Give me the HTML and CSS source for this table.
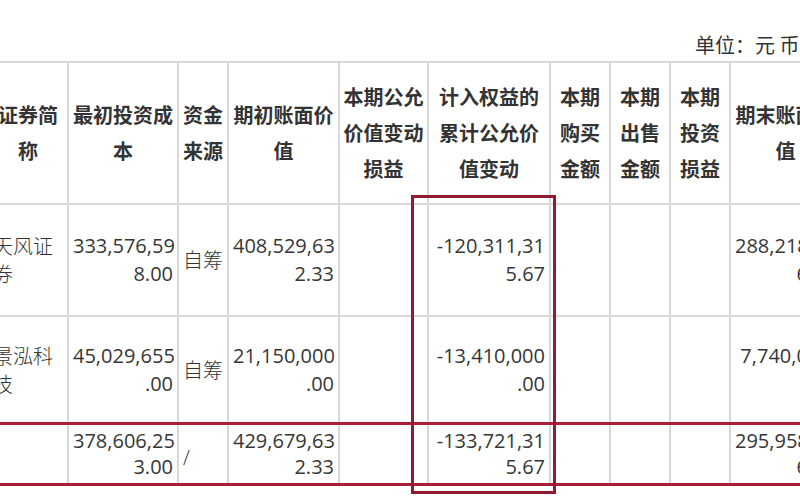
FILE: index.html
```html
<!DOCTYPE html>
<html lang="zh-CN">
<head>
<meta charset="utf-8">
<title>证券投资情况</title>
<link rel="stylesheet" href="styles.css">
</head>
<body>
<div class="page">
  <div class="unit">单位：元 币种：人民币</div>
  <table class="grid">
    <colgroup>
      <col class="c0"><col class="c1"><col class="c2"><col class="c3"><col class="c4">
      <col class="c5"><col class="c6"><col class="c7"><col class="c8"><col class="c9">
    </colgroup>
    <thead>
      <tr class="head">
        <th>证券简<br>称</th>
        <th>最初投资成<br>本</th>
        <th>资金<br>来源</th>
        <th>期初账面价<br>值</th>
        <th>本期公允<br>价值变动<br>损益</th>
        <th>计入权益的<br>累计公允价<br>值变动</th>
        <th>本期<br>购买<br>金额</th>
        <th>本期<br>出售<br>金额</th>
        <th>本期<br>投资<br>损益</th>
        <th>期末账面价<br>值</th>
      </tr>
    </thead>
    <tbody>
      <tr class="r1">
        <td class="name">天风证<br>券</td>
        <td class="num">333,576,59<br>8.00</td>
        <td class="src">自筹</td>
        <td class="num">408,529,63<br>2.33</td>
        <td></td>
        <td class="num">-120,311,31<br>5.67</td>
        <td></td><td></td><td></td>
        <td class="num">288,218,31<br>6.66</td>
      </tr>
      <tr class="r2">
        <td class="name">景泓科<br>技</td>
        <td class="num">45,029,655<br>.00</td>
        <td class="src">自筹</td>
        <td class="num">21,150,000<br>.00</td>
        <td></td>
        <td class="num">-13,410,000<br>.00</td>
        <td></td><td></td><td></td>
        <td class="num">7,740,000.<br>00</td>
      </tr>
      <tr class="total">
        <td class="name"></td>
        <td class="num">378,606,25<br>3.00</td>
        <td class="src slash">/</td>
        <td class="num">429,679,63<br>2.33</td>
        <td></td>
        <td class="num">-133,721,31<br>5.67</td>
        <td></td><td></td><td></td>
        <td class="num">295,958,31<br>6.66</td>
      </tr>
    </tbody>
  </table>
  <div class="highlight"></div>
</div>
</body>
</html>
```
FILE: styles.css
```css
html, body {
  margin: 0;
  padding: 0;
  background: #ffffff;
  overflow: hidden;
  width: 800px;
  height: 500px;
}

.page {
  position: relative;
  width: 800px;
  height: 500px;
  overflow: hidden;
  font-family: "Open Sans", "Noto Sans CJK SC", sans-serif;
  color: #333333;
}

.unit {
  height: 61px;
  box-sizing: border-box;
  padding: 0 0 2px 695px;
  display: flex;
  align-items: flex-end;
  font-family: "Noto Sans CJK SC", sans-serif;
  font-size: 20px;
  line-height: 28px;
  font-weight: 400;
  color: #333333;
  white-space: nowrap;
}

.grid {
  border-collapse: collapse;
  table-layout: fixed;
  width: 853px;
  margin-left: -13px;
}

.c0 { width: 80px; }
.c1 { width: 110px; }
.c2 { width: 50px; }
.c3 { width: 111px; }
.c4 { width: 89px; }
.c5 { width: 122px; }
.c6 { width: 60px; }
.c7 { width: 60px; }
.c8 { width: 60px; }
.c9 { width: 111px; }

.grid th,
.grid td {
  border: 2px solid #d8d8d8;
  padding: 0 4px;
  vertical-align: middle;
  overflow: hidden;
  white-space: nowrap;
}

.grid th {
  font-family: "Noto Sans CJK SC", sans-serif;
  font-weight: 700;
  font-size: 20px;
  line-height: 36px;
  text-align: center;
  color: #333333;
  height: 140px;
  padding: 0;
}

.grid td {
  font-size: 20px;
  line-height: 28px;
}

.r1 td { height: 110px; }
.r2 td { height: 105px; }
.total td {
  height: 58px;
  line-height: 26px;
  border-top: 3px solid #ab1e38;
  border-bottom: 3px solid #ab1e38;
}

.num {
  text-align: right;
  font-family: "Open Sans", sans-serif;
  font-weight: 400;
  color: #363636;
}

.name {
  text-align: left;
  font-family: "Noto Sans CJK SC", sans-serif;
  font-weight: 300;
  padding-left: 3px;
}

.src {
  text-align: left;
  font-family: "Noto Sans CJK SC", sans-serif;
  font-weight: 300;
  padding-left: 4px;
}

.total td.slash {
  font-family: "Open Sans", sans-serif;
  padding-top: 8px;
  height: 50px;
}

.highlight {
  position: absolute;
  left: 411px;
  top: 195px;
  width: 145px;
  height: 299px;
  box-sizing: border-box;
  border: 3px solid #8f1c30;
}
```
